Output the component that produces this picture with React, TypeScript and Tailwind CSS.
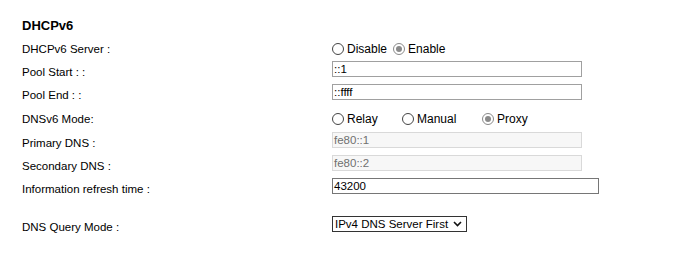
import React from "react";

function Radio({ checked, label }: { checked?: boolean; label: string }) {
  return (
    <span className="flex items-center gap-[3px]">
      <span
        className={
          "flex h-[12px] w-[12px] items-center justify-center rounded-full border bg-white " +
          (checked ? "border-[#8a8a8a]" : "border-[#444]")
        }
      >
        {checked && <span className="h-[6px] w-[6px] rounded-full bg-[#8a8a8a]" />}
      </span>
      <span className="text-[12px] leading-[14px] text-black">{label}</span>
    </span>
  );
}

function Label({ children, shift }: { children: React.ReactNode; shift?: boolean }) {
  return (
    <div className={"w-[310px] shrink-0 text-[11.5px] leading-[13px] text-black " + (shift ? "mt-[7px]" : "")}>
      {children}
    </div>
  );
}

function TextInput({
  value,
  width,
  disabled,
  dark,
}: {
  value: string;
  width: string;
  disabled?: boolean;
  dark?: boolean;
}) {
  return (
    <div
      className={
        "flex h-[16px] items-center border px-[1px] text-[11.5px] leading-[13px] " +
        width +
        " " +
        (disabled
          ? "border-[#d9d9d9] bg-[#f7f7f7] text-[#707070]"
          : dark
          ? "border-[#767676] bg-white text-black"
          : "border-[#a0a0a0] bg-white text-black")
      }
    >
      {value}
    </div>
  );
}

export default function App() {
  return (
    <div
      className="min-h-[253px] w-[690px] bg-white pl-[22px] pt-[17px]"
      style={{ fontFamily: '"Liberation Sans", Arial, sans-serif' }}
    >
      <div className="flex h-[16px] items-center text-[13px] font-bold leading-[15px] text-black">DHCPv6</div>

      <div className="mt-[8px] flex h-[16px] items-center">
        <Label>DHCPv6 Server :</Label>
        <div className="flex items-center gap-[6px]">
          <Radio label="Disable" />
          <Radio checked label="Enable" />
        </div>
      </div>

      <div className="mt-[4px] flex h-[16px] items-center">
        <Label shift>Pool Start : :</Label>
        <TextInput value="::1" width="w-[250px]" />
      </div>

      <div className="mt-[7px] flex h-[16px] items-center">
        <Label shift>Pool End : :</Label>
        <TextInput value="::ffff" width="w-[250px]" />
      </div>

      <div className="mt-[11px] flex h-[16px] items-center">
        <Label>DNSv6 Mode:</Label>
        <div className="flex items-center">
          <div className="w-[70px]">
            <Radio label="Relay" />
          </div>
          <div className="w-[80px]">
            <Radio label="Manual" />
          </div>
          <div>
            <Radio checked label="Proxy" />
          </div>
        </div>
      </div>

      <div className="mt-[5px] flex h-[16px] items-center">
        <Label shift>Primary DNS :</Label>
        <TextInput value="fe80::1" width="w-[250px]" disabled />
      </div>

      <div className="mt-[7px] flex h-[16px] items-center">
        <Label shift>Secondary DNS :</Label>
        <TextInput value="fe80::2" width="w-[250px]" disabled />
      </div>

      <div className="mt-[7px] flex h-[16px] items-center">
        <Label shift>Information refresh time :</Label>
        <TextInput value="43200" width="w-[267px]" dark />
      </div>

      <div className="mt-[22px] flex h-[16px] items-center">
        <Label shift>DNS Query Mode :</Label>
        <div className="flex h-[16px] w-[135px] shrink-0 items-center justify-between whitespace-nowrap border border-[#333] bg-white pl-[2px] pr-[4px] text-[11.5px] leading-[14px] text-black">
          <span>IPv4 DNS Server First</span>
          <svg width="9" height="6" viewBox="0 0 9 6" fill="none" className="shrink-0">
            <path d="M1 1 L4.5 4.5 L8 1" stroke="#111" strokeWidth="1.6" />
          </svg>
        </div>
      </div>
    </div>
  );
}
